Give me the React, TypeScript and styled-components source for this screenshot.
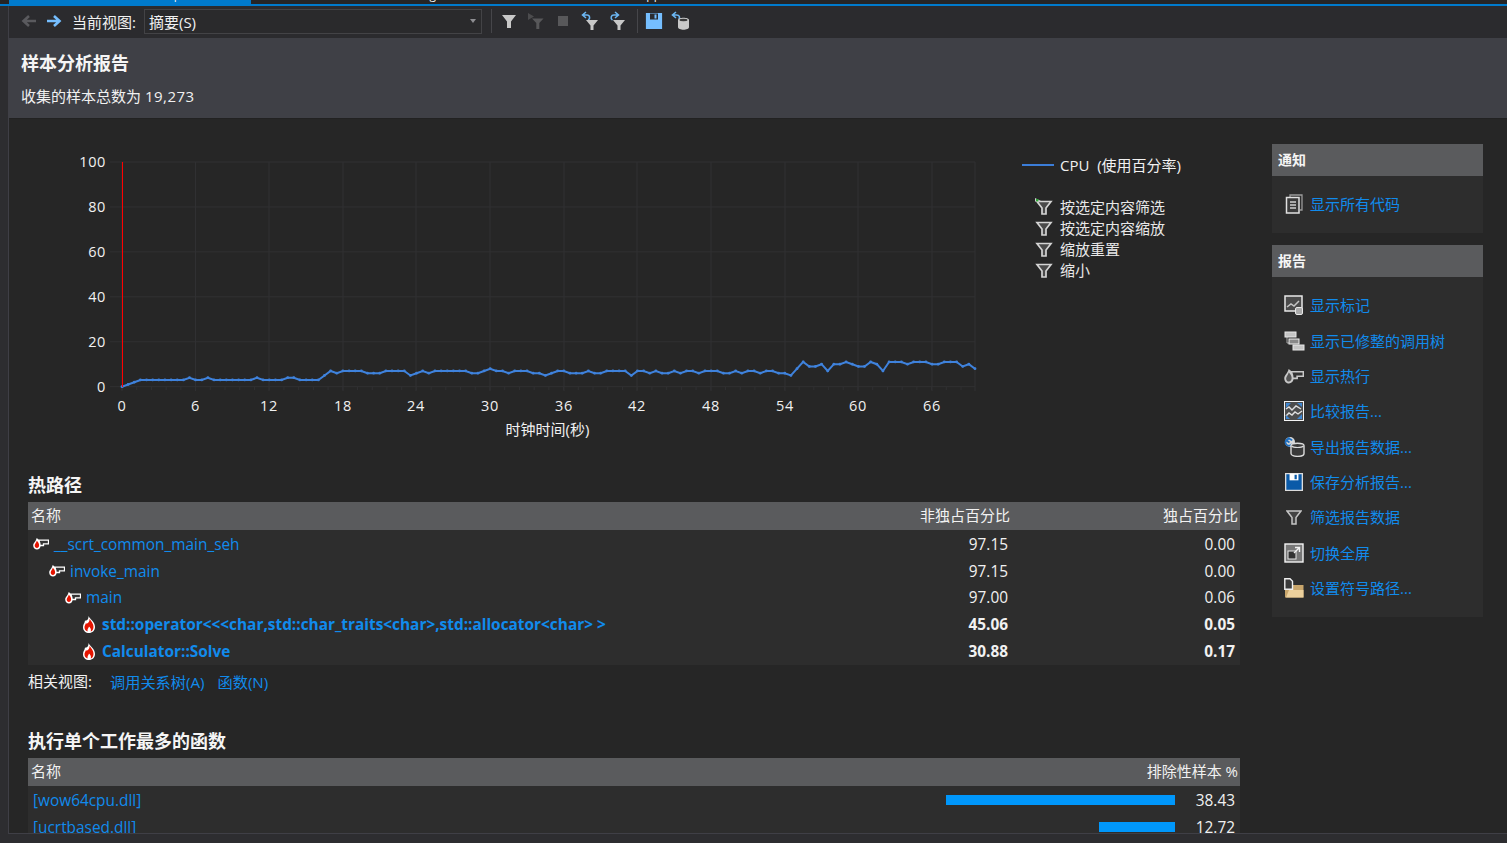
import React from "react";
import styled, { createGlobalStyle } from "styled-components";

const FONT = `"Open Sans", "Noto Sans CJK SC", sans-serif`;

const Global = createGlobalStyle`
  html, body { margin: 0; padding: 0; background: #2d2d30; overflow: hidden; }
  * { box-sizing: border-box; }
`;

const Frame = styled.div`
  width: 1507px; height: 843px; display: flex; flex-direction: column; overflow: hidden;
  font-family: ${FONT}; font-size: 15px; color: #f1f1f1; background: #2d2d30;
`;
const TabStrip = styled.div`
  height: 6px; flex: none; display: flex; overflow: hidden; padding-left: 9px;
  border-bottom: 2px solid #007acc; background: #252526;
`;
const Tab = styled.div<{ $w: number; $active?: boolean }>`
  width: ${p => p.$w}px; height: 4px; overflow: hidden; flex: none;
  background: ${p => (p.$active ? "#007acc" : "transparent")};
  text-align: right; white-space: nowrap; font-size: 12px; line-height: 12px; color: #f1f1f1;
  & > span { display: block; margin-top: -11px; }
`;
const Body = styled.div`flex: 1; min-height: 0; display: flex; padding-bottom: 9px;`;
const Main = styled.div`
  margin-left: 8px; flex: 1; min-width: 0; overflow: hidden; background: #262626;
  border-left: 1px solid #3f3f46; border-bottom: 1px solid #3f3f46;
`;
const Toolbar = styled.div`
  height: 32px; display: flex; align-items: center; background: #2b2b2e; padding: 0 0 2px 11px;
`;
const ToolIcon = styled.div<{ $w?: number }>`
  width: ${p => p.$w ?? 27}px; height: 20px; display: flex; align-items: center; justify-content: center; flex: none;
`;
const ToolLabel = styled.span`font-size: 15px; margin: 0 8px 0 2px; color: #f1f1f1; white-space: nowrap;`;
const Combo = styled.div`
  width: 338px; height: 25px; border: 1px solid #434346; background: #2a2a2c; display: flex; align-items: center;
  justify-content: space-between; padding: 0 5px 0 4px; font-size: 15px; flex: none;
  &::after { content: ""; border: 3.5px solid transparent; border-top: 4px solid #8e8e92; border-bottom: 0; }
`;
const Sep = styled.div<{ $l: number; $r: number }>`
  width: 1px; height: 24px; background: #46464a; margin: 0 ${p => p.$r}px 0 ${p => p.$l}px; flex: none;
`;
const ReportHeader = styled.header`
  height: 81px; background: #3f4046; padding: 13px 12px 0; border-bottom: 1px solid #222;
`;
const ReportTitle = styled.h1`margin: 0; font-size: 18px; line-height: 24px; font-weight: 700; color: #f5f5f5;`;
const ReportSub = styled.p`margin: 11px 0 0; font-size: 15px; line-height: 20px; color: #f1f1f1;`;
const Count = styled.span`letter-spacing: .5px;`;

const Content = styled.div`display: flex; padding: 25px 0 0 19px; gap: 32px; align-items: flex-start;`;
const LeftCol = styled.div`width: 1212px; flex: none;`;
const RightCol = styled.aside`width: 211px; flex: none; display: flex; flex-direction: column; gap: 12px;`;

const ChartRow = styled.div`display: flex; height: 326px;`;
const ChartSvg = styled.svg`width: 972px; height: 326px; flex: none; display: block;`;
const AxisText = styled.text`font-family: ${FONT}; font-size: 14.5px; fill: #f1f1f1; letter-spacing: .6px;`;
const AxisTitle = styled.text`font-family: ${FONT}; font-size: 15px; fill: #f1f1f1;`;
const Legend = styled.div`margin-left: 22px; padding-top: 10px; flex: 1;`;
const LegendKey = styled.div`display: flex; align-items: center; height: 21px; font-size: 15px; white-space: nowrap;`;
const LegendLine = styled.span`width: 32px; height: 2px; background: #3b7dd8; margin-right: 6px; flex: none;`;
const LegendActions = styled.div`margin-top: 21px;`;
const LegendAction = styled.div`display: flex; align-items: center; height: 21px; padding-left: 13px; gap: 7px; font-size: 15px; white-space: nowrap; color: #e8e8e8;`;

const SectionTitle = styled.h2`margin: 0; font-size: 18px; line-height: 30px; padding-bottom: 2px; font-weight: 700; color: #f5f5f5;`;
const TableHead = styled.div<{ $cols: string }>`
  display: grid; grid-template-columns: ${p => p.$cols}; height: 28px; align-items: center;
  background: #5a5b5d; padding: 0 2px 3px 3px; font-size: 15px; color: #f1f1f1; text-align: right;
  & > :first-child { text-align: left; }
`;
const Rows = styled.div<{ $top: number; $bottom: number }>`
  background: #2d2d2d; padding: ${p => p.$top}px 0 ${p => p.$bottom}px;
`;
const Row = styled.div<{ $bold?: boolean }>`
  display: grid; grid-template-columns: 1fr 228px 228px; height: 26.8px; align-items: center;
  font-weight: ${p => (p.$bold ? 700 : 400)}; font-size: 15.4px;
  & > div + div { text-align: right; padding-right: 4px; color: #f1f1f1; }
  & > div:last-child { padding-right: 5px; }
`;
const NameCell = styled.div<{ $level: number }>`
  display: flex; align-items: center; padding-left: ${p => 5 + p.$level * 16}px; gap: 5px; white-space: pre;
`;
const LinkText = styled.a`color: #118bec; text-decoration: none; cursor: pointer;`;
const Related = styled.div`display: flex; align-items: center; height: 34px; padding-bottom: 2px; font-size: 15.2px; color: #f1f1f1;`;
const RelatedLabel = styled.span`width: 82px; font-size: 15px;`;
const RelatedLink = styled(LinkText)`margin-right: 13px;`;
const Spacer = styled.div`height: 27px;`;
const FuncRow = styled.div`
  display: grid; grid-template-columns: 1fr 65px; height: 27px; align-items: center; padding-left: 5px; font-size: 15.4px;
  & > :last-child { text-align: right; padding-right: 5px; color: #f1f1f1; }
`;
const FuncName = styled.div`display: flex; align-items: center; justify-content: space-between;`;
const Bar = styled.div<{ $pct: number }>`height: 10px; background: #0097fb; width: ${p => p.$pct * 5.96}px;`;

const Panel = styled.section`background: #2d2d2d;`;
const PanelHead = styled.div`height: 32px; background: #5a5b5d; padding: 0 0 2px 6px; display: flex; align-items: center; font-size: 14px; font-weight: 700; color: #f5f5f5;`;
const PanelBody = styled.div`padding: 10px 0 12px 12px;`;
const SideLink = styled.div`display: flex; align-items: center; height: 35.3px; gap: 6px; white-space: nowrap;`;
const SideIcon = styled.div`width: 20px; height: 22px; display: flex; align-items: center; justify-content: center; flex: none; padding-top: 1px;`;

const Glyph = styled.svg<{ $flip?: boolean; $mx?: number }>`
  flex: none; display: block;
  margin: 0 ${p => p.$mx ?? 0}px;
  transform: ${p => (p.$flip ? "scaleX(-1)" : "none")};
`;

/* ---------- drawn icons ---------- */
const Funnel = ({ fill = "#c8c8c8", stroke = "none", w = 16 }: { fill?: string; stroke?: string; w?: number }) => (
  <Glyph width={w} height={w} viewBox="0 0 16 16">
    <path d="M1 2h14L10 8.500V15H6V8.500z" fill={fill} stroke={stroke} strokeWidth="1.500" />
  </Glyph>
);
const DimFlagFunnel = () => (
  <Glyph width="16" height="16" viewBox="0 0 16 16">
    <path d="M4 5.500h11.500l-4.200 4.500V16H8.300v-6z" fill="#58585a" />
    <path d="M0 0l6 3.500L0 7z" fill="#4c4c4e" />
  </Glyph>
);
const LegendFunnel = ({ flag }: { flag?: boolean }) => (
  <Glyph width="18" height="18" viewBox="0 0 18 18">
    <path d="M2 3.500h14l-5 6.500v6H7v-6z" fill="#4a4a4a" stroke="#d4d4d4" strokeWidth="1.700" />
    {flag && <path d="M0 0l7 3.500H0z" fill="#d0d0d0" />}
    {flag && <rect x="1" y="1" width="2.400" height="2.400" fill="#2ea836" />}
  </Glyph>
);
const Arrow = ({ color, back }: { color: string; back?: boolean }) => (
  <Glyph width="16" height="14" viewBox="0 0 16 14" $flip={back}>
    <path d="M1 7h12M8 2l5.500 5L8 12" fill="none" stroke={color} strokeWidth="2.600" />
  </Glyph>
);
const Loop = ({ back }: { back?: boolean }) => (
  <Glyph width="20" height="20" viewBox="0 0 20 20">
    <path d={back ? "M6 1L2.500 4 6 7M3 4h4c3 0 3.500 4 1 5" : "M8 1l3.500 3L8 7M11 4H7c-3 0-4 3.500-1.500 5"} fill="none" stroke="#6cb8f5" strokeWidth="1.500" />
    <path d="M6 9h12l-4.500 5.500V19h-3v-4.500z" fill="#c8c8c8" />
  </Glyph>
);
const Floppy = ({ fill, edge, size = 18 }: { fill: string; edge?: string; size?: number }) => (
  <Glyph width={size} height={size} viewBox="0 0 18 18">
    <path d="M1.500 1.500h15v15h-15z" fill={fill} stroke={edge ?? fill} strokeWidth="1.200" />
    <rect x="5" y="1.500" width="8" height="6" fill={edge ? "#fff" : "#2b2b2e"} />
    <rect x="9.500" y="2.500" width="2" height="4" fill={fill} />
  </Glyph>
);
const Export = () => (
  <Glyph width="20" height="20" viewBox="0 0 20 20">
    <path d="M5 1L1.500 4 5 7M2 4h3.500c3 0 3.500 2 2.500 4" fill="none" stroke="#6cb8f5" strokeWidth="1.600" />
    <path d="M7 9c0-3 11-3 11 0v7c0 3.600-11 3.600-11 0z" fill="#c8c8c8" />
    <ellipse cx="12.500" cy="9" rx="4" ry="1.200" fill="#3a3a3a" />
  </Glyph>
);
const ExportBig = () => (
  <Glyph width="21" height="21" viewBox="0 0 21 21">
    <circle cx="6" cy="6" r="5" fill="#d8d8d8" />
    <path d="M9 4.500A3.500 3.500 0 1 0 9 8M6.500 1.500L3.500 4.500l3 2" transform="translate(-1 0)" fill="none" stroke="#1f6fc0" strokeWidth="1.800" />
    <path d="M7 9.500c0-3 13-3 13 0v8c0 3.800-13 3.800-13 0z" fill="#3a3a3a" stroke="#dcdcdc" strokeWidth="1.400" />
    <path d="M7.500 10c2 2 10 2 12 0" fill="none" stroke="#dcdcdc" strokeWidth="1.200" />
  </Glyph>
);
const HotPointer = ({ w = 16, color = "#fff", flame = "#e51400", edge = "#fff" }: { w?: number; color?: string; flame?: string; edge?: string }) => (
  <Glyph width={w} height={w * 0.75} viewBox="0 0 16 12">
    <path d="M6 2.200h9.500v3.600H10.500V7.500H6z" fill="#333" stroke={color} strokeWidth="1.300" />
    <path d="M3.700 0C6 1.500 7.700 3.800 7.700 7.200c0 2.800-1.800 4.300-3.700 4.300S.2 10 .2 7.500C.2 5 2.800 3.800 3.700 0z" fill={edge} />
    <path d="M3.800 2.700c1.300 1.300 2.300 2.700 2.300 4.500 0 1.700-1 2.800-2.200 2.800S1.700 9 1.700 7.500c0-1.500 1.600-2.700 2.100-4.800z" fill={flame} />
  </Glyph>
);
const Flame = () => (
  <Glyph width="14" height="17" viewBox="0 0 14 17" $mx={1}>
    <path d="M6.500 0c.8 2.500 6.500 5.500 6.500 11 0 3.700-2.800 6-6 6s-6-2.300-6-5.800c0-3 1.600-3.700 2-6.700C4.500 5.200 6.800 3.500 6.500 0z" fill="#fff" />
    <path d="M7.500 2.700c1 2 4 4.200 4 8.300 0 2.300-1.200 3.900-2.800 4.600.8-2-.3-3.700-1.700-5C6.700 12 5.300 12.600 5.500 15.500 3.700 14.800 2.500 13.200 2.500 11.200c0-1.500 .8-2 1.200-3.700C5.700 8 7.800 5.700 7.500 2.700z" fill="#e51400" />
  </Glyph>
);
const IconDocs = () => (
  <Glyph width="18" height="20" viewBox="0 0 18 20">
    <path d="M5 3V1h12v15h-2" fill="none" stroke="#9a9a9a" strokeWidth="1.300" />
    <rect x="1.500" y="3.500" width="12.500" height="15.500" fill="#3a3a3a" stroke="#e0e0e0" strokeWidth="1.500" />
    <path d="M5 8h6M5 11h6M5 14h6" stroke="#d0d0d0" strokeWidth="1.300" />
  </Glyph>
);
const IconMarks = () => (
  <Glyph width="20" height="20" viewBox="0 0 20 20">
    <rect x="1" y="1" width="17" height="15" fill="#4a4a4a" stroke="#e8e8e8" strokeWidth="1.500" />
    <path d="M3 12l4-3 3 2 5-5" fill="none" stroke="#c4c4c4" strokeWidth="1.500" />
    <rect x="11.500" y="12.500" width="7" height="7" rx="1.500" fill="#aaa" stroke="#e8e8e8" />
  </Glyph>
);
const IconTree = () => (
  <Glyph width="21" height="20" viewBox="0 0 21 20">
    <path d="M3 6v6h5" fill="none" stroke="#aaa" />
    <rect x="1" y="1" width="11" height="5" fill="#c4c4c4" stroke="#e8e8e8" />
    <rect x="5" y="8" width="10" height="5" fill="#888" stroke="#f0f0f0" />
    <rect x="9" y="14" width="11" height="5" fill="#c4c4c4" stroke="#e8e8e8" />
  </Glyph>
);
const IconCompare = () => (
  <Glyph width="20" height="20" viewBox="0 0 20 20">
    <rect x=".5" y=".5" width="19" height="19" fill="#4c4c4c" stroke="#f4f4f4" />
    <path d="M2 15l3-3 3 2 3-3 3 2 4-3M2 8l3-2 3 3 4-4 5 3" fill="none" stroke="#e0e0e0" strokeWidth="1.400" />
    <path d="M2 2h5L2 7zM18 18h-5l5-5zM13 2h5v4zM2 14v4h4z" fill="#3f86d0" />
  </Glyph>
);
const IconFull = () => (
  <Glyph width="20" height="20" viewBox="0 0 20 20">
    <rect x="1" y="1" width="18" height="18" fill="#777" stroke="#f4f4f4" strokeWidth="1.400" />
    <rect x="4" y="8" width="8" height="8" fill="#333" stroke="#e8e8e8" />
    <path d="M10 10l5-5M11 4.500h4.500V9" fill="none" stroke="#f0f0f0" strokeWidth="1.400" />
  </Glyph>
);
const IconSymbol = () => (
  <Glyph width="20" height="20" viewBox="0 0 20 20">
    <path d="M1 9h5l2-2h11.500v12.500H1z" fill="#c9a66c" />
    <path d="M5 12h14.500v7.500H2z" fill="#ecd09c" />
    <path d="M.8.800h5.200l2.500 2.500v8H.8z" fill="#3a3a3a" stroke="#f0f0f0" strokeWidth="1.400" />
  </Glyph>
);

/* ---------- chart data ---------- */
const rep = (v: number, n: number) => Array.from({ length: n }, () => v);
const cpu = [
  0, 1, 2, ...rep(3, 8), 4, 3, 3, 4, ...rep(3, 7), 4, ...rep(3, 4), 4, 4, ...rep(3, 4), 5, 7, 6,
  ...rep(7, 4), ...rep(6, 3), ...rep(7, 4), 5, 6, 7, 6, ...rep(7, 6), 6, 6, 7, 8,
  7, 7, 6, 7, 7, 7, 6, 6, 5, 6, 7, 7, 6, 6, 6, 7, 6, 6, 7, 7, 7, 7, 5, 7, 7, 6, 7, 6, 6, 7, 6, 7, 7,
  6, 7, 7, 7, 6, 6, 7, 6, 7, 7, 6, 7, 7, 6, 6, 5, 8,
  11, 9, 9, 10, 7, 10, 10, 11, 10, 9, 9, 11, 10, 7, 11, 11, 11, 10, 11, 11, 11, 10, 10, 11, 11, 11, 9, 10, 8,
];
const plotX = (v: number) => v - 28;
const plotY = (v: number) => v - 144;
const GRID = "#303032";
const yTicks = [0, 20, 40, 60, 80, 100];
const xLabels = [
  ["0", 122], ["6", 195.5], ["12", 269], ["18", 343], ["24", 416], ["30", 490], ["36", 564],
  ["42", 637], ["48", 711], ["54", 785], ["60", 858], ["66", 932],
] as [string, number][];
const pts = cpu.map((v, i) => [plotX(122 + (i * 853) / (cpu.length - 1)), plotY(386.7 - v * 2.25)]);

const Chart = () => (
  <ChartSvg viewBox="0 0 972 326">
    {yTicks.map(t => {
      const y = plotY(386.7 - t * 2.247);
      return (
        <g key={t}>
          <line x1={plotX(110)} x2={plotX(975)} y1={y} y2={y} stroke={GRID} />
          <AxisText x={plotX(106)} y={y + 5} textAnchor="end">{t}</AxisText>
        </g>
      );
    })}
    {xLabels.map(([l, x]) => (
      <g key={l}>
        <line x1={plotX(x)} x2={plotX(x)} y1={plotY(162)} y2={plotY(391)} stroke={GRID} />
        <AxisText x={plotX(x)} y={plotY(411)} textAnchor="middle">{l}</AxisText>
      </g>
    ))}
    <line x1={plotX(975)} x2={plotX(975)} y1={plotY(162)} y2={plotY(391)} stroke={GRID} />
    {Array.from({ length: 58 }, (_, i) => 122 + i * 14.72).map(x => (
      <line key={x} x1={plotX(x)} x2={plotX(x)} y1={plotY(387)} y2={plotY(390)} stroke={GRID} />
    ))}
    <AxisTitle x={plotX(547.5)} y={plotY(435)} textAnchor="middle">时钟时间(秒)</AxisTitle>
    <polyline points={pts.map(p => p.join(",")).join(" ")} fill="none" stroke="#3f82dc" strokeWidth="2" />
    {pts.map(([x, y], i) => <circle key={i} cx={x} cy={y} r="1.400" fill="#3f82dc" />)}
    <line x1={plotX(122.5)} x2={plotX(122.5)} y1={plotY(162)} y2={plotY(387)} stroke="#ff0000" />
  </ChartSvg>
);

const hot = [
  { name: "__scrt_common_main_seh", inc: "97.15", exc: "0.00", level: 0 },
  { name: "invoke_main", inc: "97.15", exc: "0.00", level: 1 },
  { name: "main", inc: "97.00", exc: "0.06", level: 2 },
  { name: "std::operator<<<char,std::char_traits<char>,std::allocator<char> >", inc: "45.06", exc: "0.05", level: 3, bold: true },
  { name: "Calculator::Solve", inc: "30.88", exc: "0.17", level: 3, bold: true },
];
const funcs = [
  { name: "[wow64cpu.dll]", pct: 38.43 },
  { name: "[ucrtbased.dll]", pct: 12.72 },
];
const reports: [React.ReactNode, string][] = [
  [<IconMarks />, "显示标记"],
  [<IconTree />, "显示已修整的调用树"],
  [<HotPointer w={20} color="#c8c8c8" flame="#555" edge="#c8c8c8" />, "显示热行"],
  [<IconCompare />, "比较报告..."],
  [<ExportBig />, "导出报告数据..."],
  [<Floppy fill="#0a5aa8" edge="#dcdcdc" size={20} />, "保存分析报告..."],
  [<Funnel fill="#444" stroke="#c4c4c4" w={16} />, "筛选报告数据"],
  [<IconFull />, "切换全屏"],
  [<IconSymbol />, "设置符号路径..."],
];

export default function App() {
  return (
    <Frame>
      <Global />
      <TabStrip>
        <Tab $w={172} $active><span>Solution.exp</span></Tab>
        <Tab $w={70} $active />
        <Tab $w={185}><span>Solver.diag</span></Tab>
        <Tab $w={225}><span>Calculator.cpp</span></Tab>
      </TabStrip>
      <Body>
        <Main>
          <Toolbar>
            <ToolIcon $w={17}><Arrow color="#5a5a5e" back /></ToolIcon>
            <ToolIcon $w={8} />
            <ToolIcon $w={17}><Arrow color="#75beff" /></ToolIcon>
            <ToolIcon $w={8} />
            <ToolLabel>当前视图:</ToolLabel>
            <Combo>摘要(S)</Combo>
            <Sep $l={9} $r={4} />
            <ToolIcon><Funnel /></ToolIcon>
            <ToolIcon><DimFlagFunnel /></ToolIcon>
            <ToolIcon><svg width="12" height="12"><rect width="10" height="10" x="1" y="1" fill="#58585a" /></svg></ToolIcon>
            <ToolIcon><Loop back /></ToolIcon>
            <ToolIcon><Loop /></ToolIcon>
            <Sep $l={6} $r={3} />
            <ToolIcon><Floppy fill="#75beff" /></ToolIcon>
            <ToolIcon><Export /></ToolIcon>
          </Toolbar>
          <ReportHeader>
            <ReportTitle>样本分析报告</ReportTitle>
            <ReportSub>收集的样本总数为 <Count>19,273</Count></ReportSub>
          </ReportHeader>
          <Content>
            <LeftCol>
              <ChartRow>
                <Chart />
                <Legend>
                  <LegendKey><LegendLine />CPU&nbsp;&nbsp;(使用百分率)</LegendKey>
                  <LegendActions>
                    <LegendAction><LegendFunnel flag />按选定内容筛选</LegendAction>
                    <LegendAction><LegendFunnel />按选定内容缩放</LegendAction>
                    <LegendAction><LegendFunnel />缩放重置</LegendAction>
                    <LegendAction><LegendFunnel />缩小</LegendAction>
                  </LegendActions>
                </Legend>
              </ChartRow>
              <SectionTitle>热路径</SectionTitle>
              <TableHead $cols="1fr 228px 228px">
                <div>名称</div><div>非独占百分比</div><div>独占百分比</div>
              </TableHead>
              <Rows $top={1} $bottom={0}>
                {hot.map(r => (
                  <Row key={r.name} $bold={r.bold}>
                    <NameCell $level={r.level}>
                      {r.bold ? <Flame /> : <HotPointer />}
                      <LinkText>{r.name}</LinkText>
                    </NameCell>
                    <div>{r.inc}</div>
                    <div>{r.exc}</div>
                  </Row>
                ))}
              </Rows>
              <Related>
                <RelatedLabel>相关视图:</RelatedLabel>
                <RelatedLink>调用关系树(A)</RelatedLink>
                <RelatedLink>函数(N)</RelatedLink>
              </Related>
              <Spacer />
              <SectionTitle>执行单个工作最多的函数</SectionTitle>
              <TableHead $cols="1fr auto">
                <div>名称</div><div>排除性样本 %</div>
              </TableHead>
              <Rows $top={1} $bottom={1}>
                {funcs.map(f => (
                  <FuncRow key={f.name}>
                    <FuncName>
                      <LinkText>{f.name}</LinkText>
                      <Bar $pct={f.pct} />
                    </FuncName>
                    <div>{f.pct.toFixed(2)}</div>
                  </FuncRow>
                ))}
              </Rows>
            </LeftCol>
            <RightCol>
              <Panel>
                <PanelHead>通知</PanelHead>
                <PanelBody>
                  <SideLink><SideIcon><IconDocs /></SideIcon><LinkText>显示所有代码</LinkText></SideLink>
                </PanelBody>
              </Panel>
              <Panel>
                <PanelHead>报告</PanelHead>
                <PanelBody>
                  {reports.map(([icon, label]) => (
                    <SideLink key={label}><SideIcon>{icon}</SideIcon><LinkText>{label}</LinkText></SideLink>
                  ))}
                </PanelBody>
              </Panel>
            </RightCol>
          </Content>
        </Main>
      </Body>
    </Frame>
  );
}
